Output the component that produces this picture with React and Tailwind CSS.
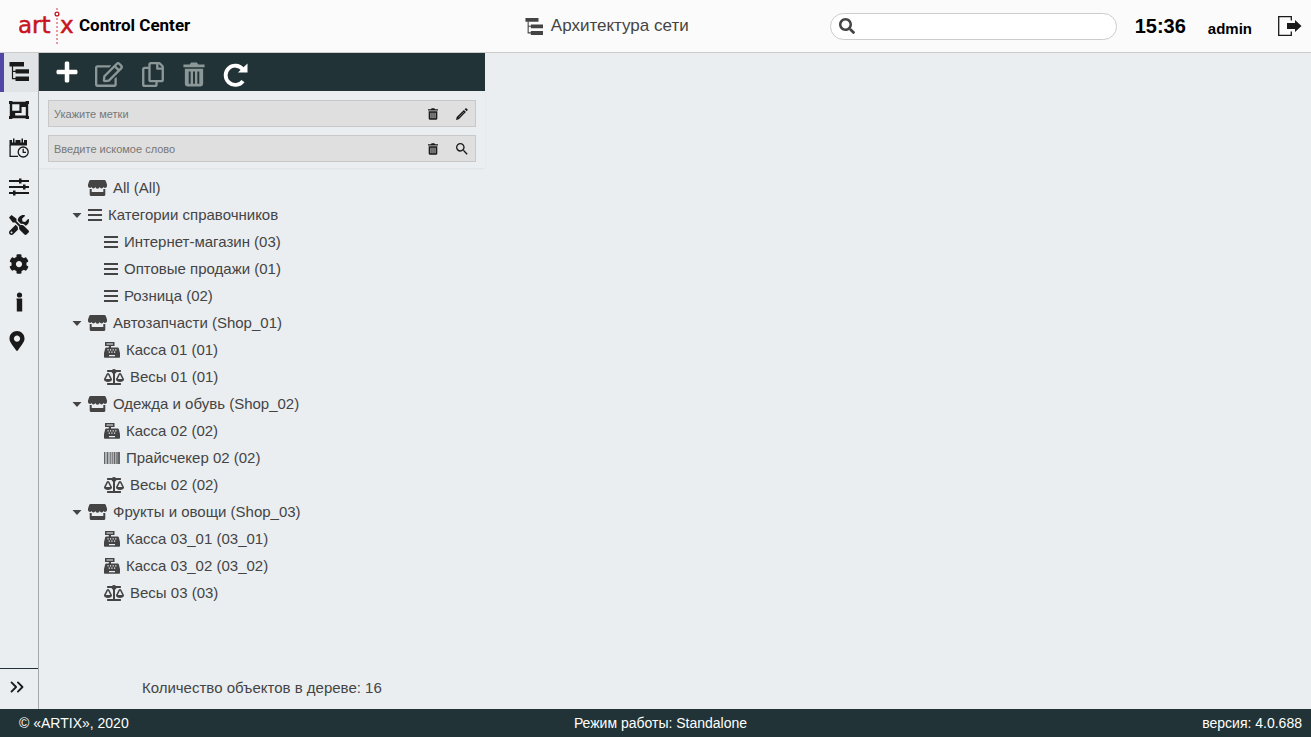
import React, { useState } from "react";
import {
  FaBalanceScale,
  FaCog,
  FaMapMarkerAlt,
  FaPlus,
  FaRegCopy,
  FaRegEdit,
  FaSearch,
  FaTools,
} from "react-icons/fa";
import { MdSearch } from "react-icons/md";
import { ChevronsRight } from "lucide-react";

function TreeIcon({ className }) {
  return (
    <svg viewBox="0 0 20 20" className={className} fill="currentColor" aria-hidden="true">
      <path d="M0.5 1H15v4.4H0.5zM6.5 8.2H20v4.3H6.5zM6.5 15.5H20V20H6.5z" />
      <path d="M3.5 5v12.6H7M3.5 10.3H7" fill="none" stroke="currentColor" strokeWidth="1.2" />
    </svg>
  );
}

function GroupIcon({ className }) {
  return (
    <svg viewBox="0 0 20 18" className={className} fill="currentColor" aria-hidden="true">
      <path
        fillRule="evenodd"
        d="M0 0h3.4v0.8h13.2V0H20v3h-0.800v12h0.800v3h-3.400v-0.800H3.400v0.800H0v-3h0.800V3H0zM3.200 3.200v6.600h7.200V3.200zM12.600 6v6H6.200v2.600h10.600V6z"
      />
    </svg>
  );
}

function ScheduleIcon({ className }) {
  return (
    <svg viewBox="0 0 20 20" className={className} fill="currentColor" aria-hidden="true">
      <path d="M0.500 2H3v2.500h1V0.500h1.500v4h1V2h5v2.500h1V0.500H14v4h1V2h3v5.500H0.500z" />
      <path d="M1.100 7v11.300H9" fill="none" stroke="currentColor" strokeWidth="1.300" />
      <circle cx="14.200" cy="14" r="5" fill="none" stroke="currentColor" strokeWidth="1.300" />
      <path d="M14.200 10.800V14.300H17" fill="none" stroke="currentColor" strokeWidth="1.300" />
    </svg>
  );
}

function SlidersIcon({ className }) {
  return (
    <svg viewBox="0 0 20 18" className={className} fill="currentColor" aria-hidden="true">
      <path d="M0 2h20v2H0zM0 8h20v2H0zM0 14h20v2H0z" />
      <path d="M10 0.500h2.500v5H10zM14 6.500h2.500v5H14zM4 12.500h2.500v5H4z" />
    </svg>
  );
}

function InfoIcon({ className }) {
  return (
    <svg viewBox="0 0 20 20" className={className} fill="currentColor" aria-hidden="true">
      <circle cx="10.500" cy="3" r="2.600" />
      <path d="M7.500 6.500H13.200V19.500H7.800V8H7.500z" />
    </svg>
  );
}

function TrashIcon({ className }) {
  return (
    <svg viewBox="0 0 22 26" className={className} fill="currentColor" aria-hidden="true">
      <path d="M0 2.500h6.500L8 0.500h6l1.500 2H22v3H0z" />
      <path
        fillRule="evenodd"
        d="M1.500 7h19v16a2.500 2.500 0 0 1-2.500 2.500H4A2.500 2.500 0 0 1 1.500 23zM5.500 10v12.500h2V10zM10 10v12.500h2V10zM14.500 10v12.500h2V10z"
      />
    </svg>
  );
}

function RefreshIcon({ className }) {
  return (
    <svg viewBox="0 0 26 26" className={className} fill="currentColor" aria-hidden="true">
      <path
        d="M20.500 7.500A10 10 0 1 0 20.800 19.800"
        fill="none"
        stroke="currentColor"
        strokeWidth="4"
      />
      <path d="M25.500 1.500V11H15.500z" />
    </svg>
  );
}

function PencilIcon({ className }) {
  return (
    <svg viewBox="0 0 12 12" className={className} fill="currentColor" aria-hidden="true">
      <path d="M0 12l0.700-2.900L7.900 2l2 2-7.100 7.200zM8.600 1.300l0.700-0.800a1 1 0 0 1 1.300 0l0.800 0.800a1 1 0 0 1 0 1.300l-0.700 0.700z" />
      <path d="M2.500 9.500L8 4" stroke="#8a8a8a" strokeWidth="0.700" />
    </svg>
  );
}

function LogoutIcon({ className }) {
  return (
    <svg viewBox="0 0 24 20" className={className} fill="currentColor" aria-hidden="true">
      <path
        d="M13.300 4.500V0.700H0.700v18.600h12.600v-3.800"
        fill="none"
        stroke="currentColor"
        strokeWidth="1.300"
      />
      <path d="M9 7h8V4l6.500 6L17 16v-3H9z" />
    </svg>
  );
}

function StoreIcon() {
  return (
    <svg viewBox="0 0 19 16" className="h-4 w-[19px]" fill="currentColor" aria-hidden="true">
      <path d="M2.500 0h14a1.500 1.500 0 0 1 1.200 0.800L19 4.500v1.700a1.900 1.900 0 0 1-3.500 0.800 2 2 0 0 1-3.800 0 2.300 2.300 0 0 1-4.400 0 2 2 0 0 1-3.800 0A1.900 1.900 0 0 1 0 6.200V4.500L1.300 0.800A1.500 1.500 0 0 1 2.500 0z" />
      <path d="M1.700 9h2v3h11.600V9h2v5.500a1.500 1.500 0 0 1-1.500 1.500H3.200a1.500 1.500 0 0 1-1.500-1.500z" />
    </svg>
  );
}

function ListIcon() {
  return (
    <svg viewBox="0 0 14 14" className="size-3.5" fill="currentColor" aria-hidden="true">
      <path d="M0 1h14v2H0zM0 6h14v2H0zM0 11h14v2H0z" />
    </svg>
  );
}

function CashIcon() {
  return (
    <svg viewBox="0 0 16 16" className="size-4" fill="currentColor" aria-hidden="true">
      <path fillRule="evenodd" d="M1 0h9.500v4H7v2H4.800V4H1zM2.500 1.400v1.200H9V1.400z" />
      <path
        fillRule="evenodd"
        d="M2.200 5.500h11.600a1 1 0 0 1 1 0.800L16 11v4a0.800 0.800 0 0 1-0.800 0.800H0.800A0.800 0.800 0 0 1 0 15v-4l1.200-4.700a1 1 0 0 1 1-0.800zM3.500 7.200v1.200h1.200V7.200zM6 7.200v1.200h1.200V7.200zM8.600 7.200v1.200h1.200V7.200zM11.200 7.200v1.200h1.200V7.200zM4.700 9.600v1.200h1.200V9.600zM7.300 9.600v1.200h1.200V9.600zM10 9.600v1.200h1.200V9.600zM5 13v1.200h6V13z"
      />
    </svg>
  );
}

function BarcodeIcon() {
  return (
    <svg viewBox="0 0 16 12" className="h-3 w-4" fill="currentColor" aria-hidden="true">
      <path d="M0 0h16v12H0z" fillOpacity="0.350" />
      <path d="M0 0h1v12H0zM3 0h1v12H3zM6 0h0.600v12H6zM8 0h0.600v12H8zM10 0h1v12h-1zM12 0h0.600v12h-0.600zM13.400 0H16v12h-2.600z" fillOpacity="0.700" />
    </svg>
  );
}

function Logo() {
  return (
    <svg viewBox="0 0 56 40" className="h-10 w-14" aria-label="artix">
      <g
        fill="#c8141e"
        stroke="#c8141e"
        strokeWidth="0.500"
        className="font-['DejaVu_Sans',sans-serif] text-[23px]"
      >
        <text x="-1" y="27">art</text>
        <text x="41" y="27">x</text>
      </g>
      <path d="M38 2v3M38 12v26" stroke="#e39aa0" strokeWidth="2" strokeDasharray="2 2" />
      <circle cx="38" cy="8" r="1.900" fill="none" stroke="#c8141e" strokeWidth="1.300" />
    </svg>
  );
}

const menu = [
  { title: "Архитектура сети", icon: <TreeIcon className="size-5" /> },
  { title: "Группы", icon: <GroupIcon className="h-[18px] w-5" /> },
  { title: "Расписание", icon: <ScheduleIcon className="size-5" /> },
  { title: "Параметры", icon: <SlidersIcon className="h-[18px] w-5" /> },
  { title: "Инструменты", icon: <FaTools className="size-5" /> },
  { title: "Настройки", icon: <FaCog className="size-5" /> },
  { title: "Информация", icon: <InfoIcon className="size-5" /> },
  { title: "Карта", icon: <FaMapMarkerAlt className="h-5 w-4" /> },
];

const icons = {
  store: <StoreIcon />,
  list: <ListIcon />,
  cash: <CashIcon />,
  scale: <FaBalanceScale className="h-4 w-5" />,
  barcode: <BarcodeIcon />,
};

const tree = [
  { icon: "store", name: "All (All)" },
  {
    icon: "list",
    name: "Категории справочников",
    children: [
      { icon: "list", name: "Интернет-магазин (03)" },
      { icon: "list", name: "Оптовые продажи (01)" },
      { icon: "list", name: "Розница (02)" },
    ],
  },
  {
    icon: "store",
    name: "Автозапчасти (Shop_01)",
    children: [
      { icon: "cash", name: "Касса 01 (01)" },
      { icon: "scale", name: "Весы 01 (01)" },
    ],
  },
  {
    icon: "store",
    name: "Одежда и обувь (Shop_02)",
    children: [
      { icon: "cash", name: "Касса 02 (02)" },
      { icon: "barcode", name: "Прайсчекер 02 (02)" },
      { icon: "scale", name: "Весы 02 (02)" },
    ],
  },
  {
    icon: "store",
    name: "Фрукты и овощи (Shop_03)",
    children: [
      { icon: "cash", name: "Касса 03_01 (03_01)" },
      { icon: "cash", name: "Касса 03_02 (03_02)" },
      { icon: "scale", name: "Весы 03 (03)" },
    ],
  },
];

function TreeNode({ node }) {
  const [open, setOpen] = useState(true);

  return (
    <li>
      <div className="flex h-[27px] items-center gap-1.5">
        {node.children ? (
          <button
            type="button"
            aria-label={node.name}
            aria-expanded={open}
            onClick={() => setOpen(!open)}
            className="w-2.5 pt-0.5"
          >
            <svg viewBox="0 0 10 5" className="h-[5px] w-2.5" fill="currentColor">
              <path d="M0.500 0h9L5 5z" />
            </svg>
          </button>
        ) : (
          <span className="w-2.5" />
        )}
        {icons[node.icon]}
        <span className="pt-0.5 whitespace-nowrap">{node.name}</span>
      </div>
      {node.children && open && (
        <ul className="pl-4">
          {node.children.map((child) => (
            <TreeNode key={child.name} node={child} />
          ))}
        </ul>
      )}
    </li>
  );
}

function FilterField({ label, action, children }) {
  return (
    <div className="flex h-[27px] items-center border border-[#c8c8c8] bg-[#dfdfdf] px-[5px] text-[#1a1a1a]">
      <input
        type="text"
        aria-label={label}
        placeholder={label}
        className="min-w-0 flex-1 bg-transparent pt-0.5 text-[11px] outline-none placeholder:text-[#777]"
      />
      <button type="button" aria-label="Очистить" className="mr-4">
        <TrashIcon className="h-3 w-2.5" />
      </button>
      <button type="button" aria-label={action} className="flex w-4 justify-center">
        {children}
      </button>
    </div>
  );
}

export default function App() {
  const [active, setActive] = useState(0);

  return (
    <div className="flex min-h-screen flex-col bg-[#eaeef1] font-['Liberation_Sans',Arial,sans-serif] text-[15px] text-[#444]">
      <header className="flex h-[53px] items-center border-b border-[#ccc] bg-[#fbfbfb] pr-[9px]">
        <div className="flex w-2/5 items-center gap-1 pl-[19px]">
          <Logo />
          <span className="font-[Roboto,sans-serif] text-[17px] font-bold text-black">
            Control Center
          </span>
        </div>
        <h1 className="flex flex-1 items-center gap-2 pl-1 text-[17px]">
          <TreeIcon className="size-[18px]" />
          Архитектура сети
        </h1>
        <label className="flex h-[27px] w-[22%] items-center gap-2 rounded-full border border-[#ccc] bg-white px-2">
          <FaSearch className="size-4" />
          <input type="search" aria-label="Поиск" className="min-w-0 flex-1 outline-none" />
        </label>
        <span className="ml-[18px] text-[20px] font-bold text-black">15:36</span>
        <span className="mt-1.5 ml-[22px] font-bold text-black">admin</span>
        <button type="button" aria-label="Выход" className="ml-[26px] text-[#1a1a1a]">
          <LogoutIcon className="h-5 w-6" />
        </button>
      </header>

      <div className="flex flex-1">
        <nav className="flex w-[39px] flex-col justify-between border-r border-[#a5a8aa] text-[#1a1a1a]">
          <div className="grid h-[308px] grid-rows-8">
            {menu.map((item, i) => (
              <button
                key={item.title}
                type="button"
                aria-label={item.title}
                onClick={() => setActive(i)}
                className={`flex items-center border-l-4 pb-0.5 pl-[5px] ${
                  i === active ? "border-[#4f46a5] bg-[#e0e4e7]" : "border-transparent"
                }`}
              >
                {item.icon}
              </button>
            ))}
          </div>
          <button
            type="button"
            aria-label="Развернуть меню"
            className="flex h-[41px] items-center border-t border-[#213336] pb-1 pl-1.5"
          >
            <ChevronsRight className="size-[22px]" />
          </button>
        </nav>

        <section className="flex w-[34%] flex-col">
          <div className="flex h-[38px] items-center bg-[#213336] pl-4 text-white">
            <button type="button" aria-label="Добавить">
              <FaPlus className="size-6" />
            </button>
            <div className="flex items-center gap-[18px] pt-1 pl-4">
              <button type="button" aria-label="Изменить" disabled className="text-[#8c9798]">
                <FaRegEdit className="h-[25px] w-7" />
              </button>
              <button type="button" aria-label="Копировать" disabled className="text-[#8c9798]">
                <FaRegCopy className="h-[25px] w-6" />
              </button>
              <button type="button" aria-label="Удалить" disabled className="text-[#8c9798]">
                <TrashIcon className="h-[25px] w-[22px]" />
              </button>
              <button type="button" aria-label="Обновить">
                <RefreshIcon className="size-[25px]" />
              </button>
            </div>
          </div>
          <div className="flex flex-col gap-2 px-[9px] pt-[9px] pb-1.5 shadow-xs">
            <FilterField label="Укажите метки" action="Выбрать метки">
              <PencilIcon className="size-3" />
            </FilterField>
            <FilterField label="Введите искомое слово" action="Найти">
              <MdSearch className="size-4" />
            </FilterField>
          </div>
          <ul className="flex-1 pt-1.5 pl-[33px]">
            {tree.map((node) => (
              <TreeNode key={node.name} node={node} />
            ))}
          </ul>
          <p className="py-2.5 text-center">Количество объектов в дереве: 16</p>
        </section>
        <main className="flex-1" />
      </div>

      <footer className="grid h-7 grid-cols-3 items-center bg-[#213336] pr-[9px] pl-[19px] text-[14px] text-white">
        <span>© «ARTIX», 2020</span>
        <span className="text-center">Режим работы: Standalone</span>
        <span className="text-right">версия: 4.0.688</span>
      </footer>
    </div>
  );
}
